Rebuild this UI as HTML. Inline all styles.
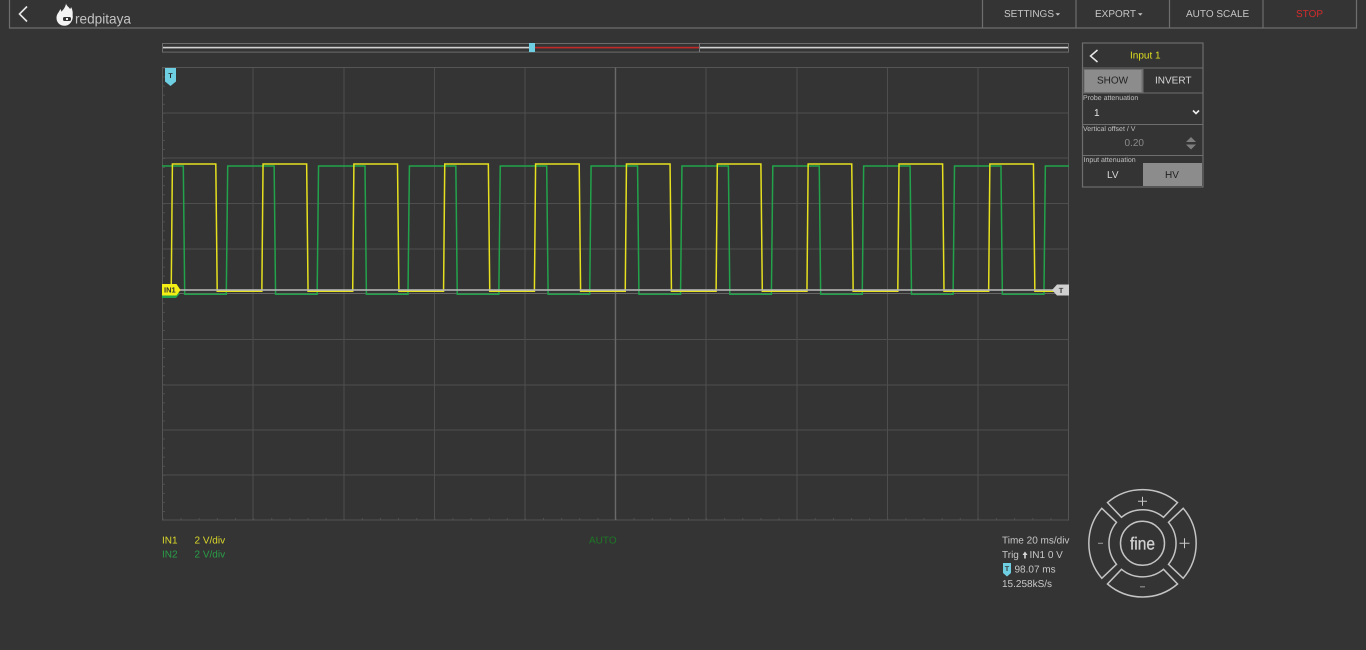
<!DOCTYPE html>
<html>
<head>
<meta charset="utf-8">
<title>Oscilloscope</title>
<style>
html,body{margin:0;padding:0;background:#343434;width:1366px;height:650px;overflow:hidden}
svg{position:absolute;left:0;top:0}
text{font-family:"Liberation Sans",sans-serif;font-size:10px;text-rendering:geometricPrecision}
</style>
</head>
<body>
<svg width="1366" height="650" viewBox="0 0 1366 650" xmlns="http://www.w3.org/2000/svg">
<defs>
<clipPath id="plot"><rect x="162" y="67" width="907" height="454"/></clipPath>
</defs>

<!-- header -->
<path d="M9.5 0V28H1356.5V0M982.5 0V28M1076 0V28M1169.5 0V28M1263 0V28" fill="none" stroke="#6e6e6e" stroke-width="1.2"/>
<path d="M27 6.5L19.5 14L27 21.5" fill="none" stroke="#e6e6e6" stroke-width="1.6"/>

<!-- logo -->
<path d="M66 3.5C66.5 6 69 7 70 9C70.8 8.4 71 7.6 71 7C72.6 9.5 73 13 72.6 15C73.6 20 70 25.8 64.5 25.8C59.5 25.8 56.3 22 56.5 17.5C56.7 13.5 59.5 12 60.2 9C61 10 61.3 10.8 61.3 11.8C63.5 9.5 65.5 7 66 3.5Z" fill="#f4f4f4"/>
<rect x="63" y="17" width="8" height="4" rx="1.5" fill="#343434"/>
<rect x="66" y="18" width="2" height="2" fill="#f4f4f4"/>
<text x="75" y="23.5" fill="#c4c4c4" textLength="56" lengthAdjust="spacingAndGlyphs" style="font-size:14px">redpitaya</text>

<g fill="#c8c8c8">
<text x="1004" y="17.2">SETTINGS</text>
<text x="1095" y="17.2">EXPORT</text>
<text x="1186" y="17.2">AUTO SCALE</text>
<text x="1296" y="17.2" fill="#d62c2c">STOP</text>
</g>
<path d="M1055.5 13.2h4.6l-2.3 2.4zM1138 13.2h4.6l-2.3 2.4z" fill="#c8c8c8"/>

<!-- range slider -->
<rect x="162.5" y="43.5" width="906" height="8.6" fill="none" stroke="#6c6c6c"/>
<rect x="163" y="46.8" width="366" height="1.6" fill="#d2d2d2"/>
<rect x="700" y="46.8" width="368" height="1.6" fill="#d2d2d2"/>
<rect x="535" y="46.8" width="164" height="1.6" fill="#c22a2a"/>
<rect x="699" y="43" width="1" height="9" fill="#7a7a7a"/>
<rect x="529" y="43" width="6" height="9" fill="#6fcfe2"/>

<!-- grid -->
<path d="M162.5 519H1068" stroke="#4e4e4e" stroke-width="2" stroke-dasharray="1 17.12" fill="none"/>
<path d="M164 67.5V520" stroke="#4e4e4e" stroke-width="2" stroke-dasharray="1 8.05" fill="none"/>
<g stroke="#4e4e4e" stroke-width="1" fill="none">
<path d="M162.5 113H1068.5M162.5 158H1068.5M162.5 203.5H1068.5M162.5 249H1068.5M162.5 339.5H1068.5M162.5 385H1068.5M162.5 430H1068.5M162.5 475H1068.5"/>
<path d="M253 67.5V520M344 67.5V520M434.5 67.5V520M525 67.5V520M706 67.5V520M797 67.5V520M887.5 67.5V520M978 67.5V520"/>
<rect x="162.5" y="67.5" width="906" height="452.5" stroke="#555"/>
</g>
<path d="M162.5 293.5H1068.5" stroke="#666" stroke-width="1"/>
<path d="M615.5 67.5V520" stroke="#6a6a6a" stroke-width="1.4"/>

<!-- traces -->
<g clip-path="url(#plot)" fill="none" stroke-width="1.5">
<path stroke="#22a34b" d="M162 166H183.3l1.4 128.3h41.6l1.4 -128.3h46.45l1.4 128.3h41.6l1.4 -128.3h46.45l1.4 128.3h41.6l1.4 -128.3h46.45l1.4 128.3h41.6l1.4 -128.3h46.45l1.4 128.3h41.6l1.4 -128.3h46.45l1.4 128.3h41.6l1.4 -128.3h46.45l1.4 128.3h41.6l1.4 -128.3h46.45l1.4 128.3h41.6l1.4 -128.3h46.45l1.4 128.3h41.6l1.4 -128.3h46.45l1.4 128.3h41.6l1.4 -128.3h46.45"/>
<path stroke="#e6e01e" d="M162 291.3H171.2l1.2 -127.3h43.4l1.4 127.3h44.65l1.2 -127.3h43.6l1.4 127.3h44.65l1.2 -127.3h43.6l1.4 127.3h44.65l1.2 -127.3h43.6l1.4 127.3h44.65l1.2 -127.3h43.6l1.4 127.3h44.65l1.2 -127.3h43.6l1.4 127.3h44.65l1.2 -127.3h43.6l1.4 127.3h44.65l1.2 -127.3h43.6l1.4 127.3h44.65l1.2 -127.3h43.6l1.4 127.3h44.65l1.2 -127.3h43.6l1.4 127.3h44.65"/>
</g>
<rect x="176" y="289.2" width="877" height="1.6" fill="#b5b5b5"/>

<!-- markers -->
<path d="M165 68H176V81.5L170.5 86L165 81.5Z" fill="#6fcfe2"/>
<text x="170.5" y="78" text-anchor="middle" fill="#222" style="font-size:7px;font-weight:bold">T</text>
<path d="M162 291H176.5L179.5 295L176 299H162Z" fill="#22a34b" transform="translate(0 -1)"/>
<path d="M162 284H176.5L180.5 290L176.5 295.5H162Z" fill="#f2ee16"/>
<text x="164" y="292.5" fill="#333" style="font-size:7.5px;font-weight:bold">IN1</text>
<path d="M1069 284.5H1057L1052 290L1057 295.5H1069Z" fill="#cfcfcf"/>
<text x="1061" y="293" text-anchor="middle" fill="#333" style="font-size:7.5px;font-weight:bold">T</text>

<!-- info -->
<text x="162" y="543.5" fill="#dcd92a">IN1</text>
<text x="194.5" y="543.5" fill="#dcd92a">2 V/div</text>
<text x="162" y="557.5" fill="#2a9f48">IN2</text>
<text x="194.5" y="557.5" fill="#2a9f48">2 V/div</text>
<text x="589" y="543.5" fill="#1c7a26">AUTO</text>
<g fill="#c8c8c8">
<text x="1002" y="543.5">Time 20 ms/div</text>
<text x="1002" y="558">Trig</text>
<text x="1029.5" y="558">IN1 0 V</text>
<text x="1014.5" y="572.5">98.07 ms</text>
<text x="1002" y="587">15.258kS/s</text>
</g>
<path d="M1025 551.5L1022.5 555H1024.2V558.5H1025.8V555H1027.5Z" fill="#d8d8d8"/>
<path d="M1003 563H1011V573L1007 576.5L1003 573Z" fill="#6fcfe2"/>
<text x="1007" y="571" text-anchor="middle" fill="#333" style="font-size:7px;font-weight:bold">T</text>

<!-- side panel -->
<rect x="1082.5" y="43" width="120.5" height="144" fill="none" stroke="#6e6e6e" stroke-width="1.2"/>
<path d="M1083 68H1203M1083 93H1203M1083 124.5H1203M1083 155.5H1203" stroke="#6e6e6e" stroke-width="1"/>
<path d="M1097.5 50L1090.5 56L1097.5 62" fill="none" stroke="#e8e8e8" stroke-width="1.5"/>
<text x="1130" y="58.5" fill="#dede20">Input 1</text>
<rect x="1084" y="69.5" width="58" height="23" fill="#8c8c8c" stroke="#6e6e6e"/>
<text x="1097" y="83.7" fill="#222">SHOW</text>
<path d="M1143 69V93" stroke="#6e6e6e"/>
<text x="1155" y="83.7" fill="#d8d8d8">INVERT</text>
<text x="1083" y="100" fill="#c0c0c0" style="font-size:7px">Probe attenuation</text>
<text x="1094" y="116" fill="#e8e8e8">1</text>
<path d="M1193 110.5L1196 113.5L1199 110.5" fill="none" stroke="#eee" stroke-width="1.6"/>
<text x="1083" y="131" fill="#c0c0c0" style="font-size:7px">Vertical offset / V</text>
<text x="1124.5" y="146.2" fill="#8a8a8a">0.20</text>
<path d="M1186 142L1191 137L1196 142ZM1186 144.5L1191 149.5L1196 144.5Z" fill="#7e7e7e"/>
<text x="1083.5" y="162" fill="#c0c0c0" style="font-size:7px">Input attenuation</text>
<text x="1107" y="178.2" fill="#d8d8d8">LV</text>
<rect x="1143" y="163" width="59" height="23" fill="#8c8c8c"/>
<text x="1165" y="178.2" fill="#222">HV</text>

<!-- jog wheel -->
<g transform="translate(1142.5 543.3)" fill="none" stroke="#c4c4c4" stroke-width="1.5">
<circle r="22"/>
<path d="M-35 -40.7A53.7 53.7 0 0 1 35 -40.7L21 -26A33 33 0 0 0 -21 -26Z"/>
<path d="M-35 -40.7A53.7 53.7 0 0 1 35 -40.7L21 -26A33 33 0 0 0 -21 -26Z" transform="rotate(90)"/>
<path d="M-35 -40.7A53.7 53.7 0 0 1 35 -40.7L21 -26A33 33 0 0 0 -21 -26Z" transform="rotate(180)"/>
<path d="M-35 -40.7A53.7 53.7 0 0 1 35 -40.7L21 -26A33 33 0 0 0 -21 -26Z" transform="rotate(270)"/>
<path d="M-4.5 -42H4.5M0 -46.5V-37.5M37 0H47M42 -5V5" stroke="#c8c8c8" stroke-width="1"/>
<path d="M-44.5 0H-39.5M-2.5 43.5H2.5" stroke="#909090" stroke-width="1.2"/>
</g>
<text x="1130" y="549.5" fill="#d0d0d0" stroke="#d0d0d0" stroke-width=".3" textLength="25" lengthAdjust="spacingAndGlyphs" style="font-size:17.5px">fine</text>
</svg>
</body>
</html>
